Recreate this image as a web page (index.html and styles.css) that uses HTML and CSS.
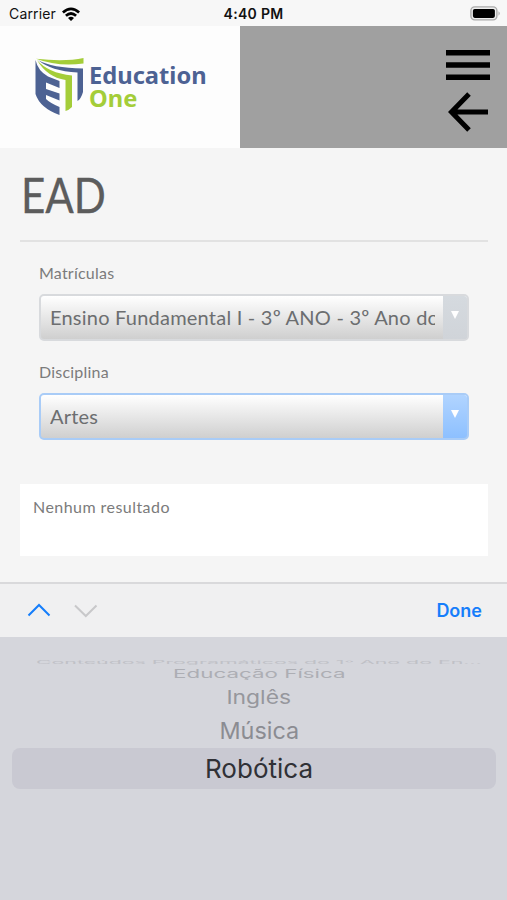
FILE: index.html
```html
<!DOCTYPE html>
<html lang="pt-BR">
<head>
<meta charset="utf-8">
<title>EAD - Education One</title>
<link rel="stylesheet" href="styles.css">
</head>
<body>
<div class="status">
  <div class="carrier"><span class="carrier-name">Carrier</span>
    <svg class="wifi" width="18" height="14" viewBox="0 0 18 14"><path d="M0 4.6Q9-3.8 18 4.6L16.2 6.5Q9 .2 1.8 6.5ZM3 7.8Q9 2.3 15 7.8L13.2 9.7Q9 6.1 4.8 9.7ZM6 10.9Q9 8.4 12 10.9L9 14Z"/></svg>
  </div>
  <span class="clock">4:40 PM</span>
  <svg class="battery" width="31" height="15" viewBox="0 0 31 15"><rect x=".9" y=".9" width="26" height="13" rx="3.8" fill="#eee" stroke="#aaa" stroke-width="1.4"/><rect x="2.9" y="2.9" width="22" height="9" rx="1.8"/><path d="M28.5 5.2Q31 7.3 28.5 9.8Z" fill="#aaa"/></svg>
</div>
<header class="header">
  <div class="brand">
    <svg class="mark" width="50" height="58" viewBox="0 0 50 58">
      <path fill="#4d6293" d="M.5 2Q3 13 13 18.500L24.500 23V30L11 24.500V31L24.500 35.500V42.500L11 37V41Q15 45 24.500 49V57Q5 50 .5 36Z"/>
      <path fill="#4d6293" d="M3 2Q17 10 48 10.500V34Q46 41 42.500 43V14.500Q16 13 3 2Z"/>
      <path fill="#a4cd39" d="M1 .8Q30 4 48.500 0V5.500Q23 9 1 .8Z"/>
      <path fill="#a4cd39" d="M2 2Q13 15 37 17.500V49Q34 52 30.500 53V22Q12 19 2 2Z"/>
    </svg>
    <div class="brand-name"><span class="name-top">Education</span><span class="name-bottom">One</span></div>
  </div>
  <div class="actions">
    <svg width="46" height="32" viewBox="0 0 46 32"><path d="M1 3.700H45M1 16H45M1 28.200H45" stroke="#000" stroke-width="5.400"/></svg>
    <svg class="back" width="42" height="40" viewBox="0 0 42 40"><path d="M22 2 4.500 20 22 38M4.500 20H41" fill="none" stroke="#000" stroke-width="5"/></svg>
  </div>
</header>
<main class="page">
  <h1 class="title"><span class="title-text">EAD</span></h1>
  <form class="form">
    <label class="label">Matrículas</label>
    <div class="select"><div class="value">Ensino Fundamental I - 3º ANO - 3º Ano do</div><div class="toggle"><i class="arrow"></i></div></div>
    <label class="label">Disciplina</label>
    <div class="select focused"><div class="value">Artes</div><div class="toggle"><i class="arrow"></i></div></div>
  </form>
  <section class="result">Nenhum resultado</section>
</main>
<div class="toolbar">
  <svg width="72" height="18" viewBox="0 0 72 18" fill="none" stroke-width="2"><path d="M1.500 13.500 12 3 22.500 13.500" stroke="#157efb"/><path d="M48 3.500 58.800 14 69.500 3.500" stroke="#c8c8ca"/></svg>
  <span class="done">Done</span>
</div>
<div class="picker">
  <div class="option far"><span>Conteúdos Programáticos do 1º Ano do En…</span></div>
  <div class="option third"><span>Educação Física</span></div>
  <div class="option second"><span>Inglês</span></div>
  <div class="option first"><span>Música</span></div>
  <div class="option selected"><span>Robótica</span></div>
</div>
</body>
</html>
```

FILE: styles.css
```css
* { box-sizing: border-box; }
body { margin: 0; width: 507px; height: 900px; overflow: hidden; display: flex; flex-direction: column; background: #f5f5f5; font-family: Lato, sans-serif; color: #7b7b7b; }
svg { display: block; flex: none; }
span { display: inline-block; white-space: nowrap; transform-origin: left center; }
.status { height: 26px; flex: none; display: grid; grid-template-columns: 1fr auto 1fr; align-items: center; padding: 1px 6px 0 9px; background: #f7f7f7; font-family: Inter, sans-serif; font-size: 14px; color: #111; }
.carrier { display: flex; gap: 6px; align-items: center; }
.carrier-name { letter-spacing: .15px; }
.clock { font-weight: 600; letter-spacing: .3px; margin-left: -3px; }
.battery { justify-self: end; }
.header { height: 122px; flex: none; display: flex; background: #a0a0a0; }
.brand { width: 240px; display: flex; background: #fdfdfd; padding: 32px 0 0 35px; gap: 4px; }
.brand-name { display: flex; flex-direction: column; align-items: flex-start; font-family: "Noto Sans", sans-serif; font-weight: 700; font-size: 23px; line-height: 23px; padding-top: 6px; }
.name-top { color: #4d6293; transform: scaleX(1.03); }
.name-bottom { color: #a4cd39; transform: scaleX(1.03); }
.actions { flex: 1; display: flex; flex-direction: column; align-items: flex-end; padding: 23px 16px 0 0; gap: 11px; }
.back { margin-right: 2px; }
.page { height: 434px; flex: none; padding: 0 19px 0 20px; }
.title { margin: 0; height: 94px; border-bottom: 2px solid #e2e2e2; font-size: 49px; font-weight: 400; line-height: 93px; color: #5c5c5c; }
.title-text { transform: scaleX(.86); margin-left: 1px; -webkit-text-stroke: .3px #5c5c5c; }
.form { padding: 21px 19px 0; }
.label { display: block; height: 31px; font-size: 16px; line-height: 19px; letter-spacing: .22px; }
.select { display: flex; height: 47px; margin-bottom: 21px; border: 2px solid #d8dadd; border-radius: 5px; background: linear-gradient(#fff, #cfcfcf); overflow: hidden; }
.value { flex: 1; min-width: 0; margin: 0 8px 0 9px; overflow: hidden; white-space: nowrap; font-size: 20px; letter-spacing: .22px; line-height: 43px; color: #6c6e70; }
.toggle { width: 24px; display: flex; justify-content: center; padding-top: 15px; background: linear-gradient(#d5dadf, #d0d4d9); }
.arrow { width: 8px; height: 8px; background: #fff; clip-path: polygon(0 0, 100% 0, 50% 100%); }
.focused { border-color: #a9ccf7; }
.focused .toggle { background: linear-gradient(#b1d4ff, #8dc0ff); }
.result { margin-top: 44px; height: 72px; background: #fff; padding: 13px; font-size: 16px; line-height: 20px; letter-spacing: .45px; }
.toolbar { height: 55px; flex: none; display: flex; align-items: center; justify-content: space-between; border-top: 2px solid #d9d9db; background: #f0f0f1; padding: 0 25px 0 27px; font-family: Inter, sans-serif; }
.done { color: #167efb; font-size: 18px; font-weight: 600; }
.picker { flex: 1; background: #d5d6dc; padding: 21px 11px 0 12px; font-family: Inter, sans-serif; font-size: 26px; line-height: 34px; }
.option { display: flex; justify-content: center; align-items: center; padding-left: 10px; }
.option span { transform-origin: center; }
.far { height: 8px; color: #c0c1c7; }
.far span { transform: scale(.82, .18); }
.third { height: 16px; color: #adaeb4; }
.third span { transform: scale(.86, .44); }
.second { height: 32px; color: #96979d; }
.second span { transform: scale(.88, .71); }
.first { height: 34px; color: #8b8c92; }
.first span { transform: scale(.9, .89); }
.selected { height: 41px; border-radius: 8px; background: #c9c9d2; color: #303136; }
```
